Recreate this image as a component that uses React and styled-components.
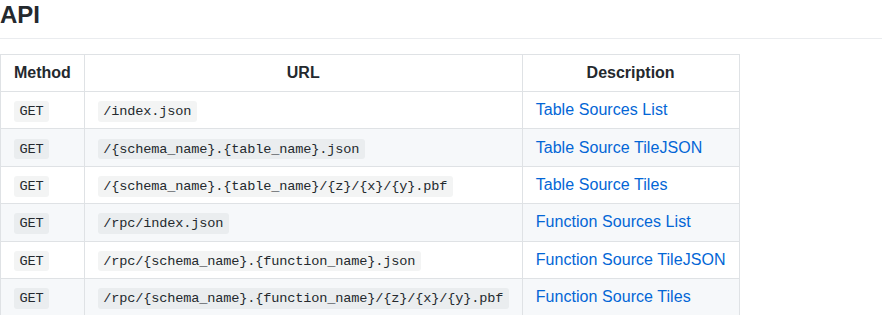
import React from "react";
import styled, { createGlobalStyle } from "styled-components";

const Global = createGlobalStyle`
  html, body { margin: 0; padding: 0; background: #fff; }
  body {
    font-family: "Liberation Sans", Arial, Helvetica, sans-serif;
    font-size: 16px;
    line-height: 1.5;
    color: #24292e;
  }
`;

const Page = styled.div`
  display: flex;
  flex-direction: column;
`;

const Heading = styled.h2`
  margin: 0 0 15px;
  padding-bottom: 8px;
  font-size: 1.5em;
  font-weight: 700;
  line-height: 1.25;
  border-bottom: 1px solid #eaecef;
`;

const Table = styled.table`
  border-collapse: collapse;
  border-spacing: 0;
  width: max-content;
`;

const Row = styled.tr`
  background: ${(p) => (p.$shaded ? "#f6f8fa" : "#fff")};
  border-top: 1px solid #c6cbd1;
`;

const HeadCell = styled.th`
  padding: 6px 13px;
  border: 1px solid #dfe2e5;
  font-weight: 700;
  text-align: center;
`;

const Cell = styled.td`
  padding: 6px 13px;
  border: 1px solid #dfe2e5;
  text-align: left;
`;

const Code = styled.code`
  font-family: "Liberation Mono", "Courier New", monospace;
  font-size: 85%;
  letter-spacing: -0.16px;
  padding: 0.2em 0.4em;
  margin: 0;
  background: rgba(27, 31, 35, 0.05);
  border-radius: 3px;
`;

const Link = styled.a`
  color: #0366d6;
  text-decoration: none;
  letter-spacing: 0.06px;
`;

const rows = [
  ["GET", "/index.json", "Table Sources List"],
  ["GET", "/{schema_name}.{table_name}.json", "Table Source TileJSON"],
  ["GET", "/{schema_name}.{table_name}/{z}/{x}/{y}.pbf", "Table Source Tiles"],
  ["GET", "/rpc/index.json", "Function Sources List"],
  ["GET", "/rpc/{schema_name}.{function_name}.json", "Function Source TileJSON"],
  ["GET", "/rpc/{schema_name}.{function_name}/{z}/{x}/{y}.pbf", "Function Source Tiles"],
];

export default function App() {
  return (
    <Page>
      <Global />
      <Heading>API</Heading>
      <Table>
        <thead>
          <Row>
            <HeadCell>Method</HeadCell>
            <HeadCell>URL</HeadCell>
            <HeadCell>Description</HeadCell>
          </Row>
        </thead>
        <tbody>
          {rows.map(([m, url, desc], i) => (
            <Row key={url} $shaded={i % 2 === 1}>
              <Cell>
                <Code>{m}</Code>
              </Cell>
              <Cell>
                <Code>{url}</Code>
              </Cell>
              <Cell>
                <Link href="#">{desc}</Link>
              </Cell>
            </Row>
          ))}
        </tbody>
      </Table>
    </Page>
  );
}
